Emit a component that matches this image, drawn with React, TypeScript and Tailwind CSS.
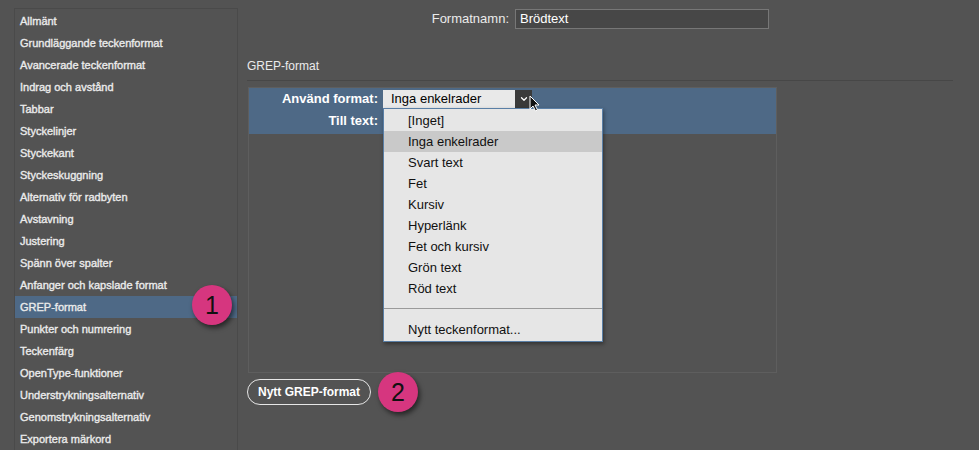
import { ChevronDown } from "lucide-react";

const sections = [
  "Allmänt",
  "Grundläggande teckenformat",
  "Avancerade teckenformat",
  "Indrag och avstånd",
  "Tabbar",
  "Styckelinjer",
  "Styckekant",
  "Styckeskuggning",
  "Alternativ för radbyten",
  "Avstavning",
  "Justering",
  "Spänn över spalter",
  "Anfanger och kapslade format",
  "GREP-format",
  "Punkter och numrering",
  "Teckenfärg",
  "OpenType-funktioner",
  "Understrykningsalternativ",
  "Genomstrykningsalternativ",
  "Exportera märkord",
];

const formats = [
  "[Inget]",
  "Inga enkelrader",
  "Svart text",
  "Fet",
  "Kursiv",
  "Hyperlänk",
  "Fet och kursiv",
  "Grön text",
  "Röd text",
];

function Badge({ n, className }: { n: number; className: string }) {
  return (
    <div
      className={`absolute flex h-10 w-10 items-center justify-center rounded-full bg-[#d6367f] text-[25px] leading-none text-[#111] shadow-[2px_3px_5px_rgba(0,0,0,0.55)] ${className}`}
    >
      {n}
    </div>
  );
}

export default function App() {
  return (
    <div className="relative flex h-[450px] w-[979px] overflow-hidden bg-[#535353] font-['Liberation_Sans',Arial,sans-serif] text-[11px] text-[#ebebeb]">
      {/* section list */}
      <aside className="ml-[14px] mt-[8px] w-[224px] shrink-0 border-l border-t border-r border-[#4a4a4a] pt-px">
        <ul>
          {sections.map((s) => (
            <li
              key={s}
              className={`flex h-[22px] items-center pl-[5px] [-webkit-text-stroke:0.35px_#ebebeb] ${
                s === "GREP-format" ? "bg-[#4e6986]" : ""
              }`}
            >
              {s}
            </li>
          ))}
        </ul>
      </aside>

      {/* main panel */}
      <main className="flex flex-1 flex-col pl-[9px] pr-[26px]">
        <div className="mt-[9px] flex h-5 items-center">
          <span className="ml-[177px] w-[91px] pr-[6px] text-right text-[13px]">Formatnamn:</span>
          <div className="flex h-5 w-[254px] items-center border border-[#777] bg-[#474747] px-[4px] text-[13px] text-white">
            Brödtext
          </div>
        </div>

        <div className="mt-[31px] text-[12px] leading-none">GREP-format</div>
        <div className="mt-[8px] h-px bg-[#474747]" />

        <div className="relative ml-px mt-[6px] h-[286px] w-[529px] border border-[#5e5e5e]">
          <div className="flex h-[46px] flex-col bg-[#4e6986] pt-px">
            <div className="flex h-[20px] items-center">
              <span className="w-[134px] pr-[5px] text-right text-[13px] font-bold text-white">Använd format:</span>
              <div className="flex h-[18px] w-[149px] items-stretch">
                <div className="flex flex-1 items-center bg-[#e9e9e9] px-[8px] text-[13px] text-black">
                  Inga enkelrader
                </div>
                <div className="flex w-[17px] items-center justify-center bg-[#3a3a3a]">
                  <ChevronDown size={10} strokeWidth={3} className="text-white" />
                </div>
              </div>
            </div>
            <div className="flex h-[24px] items-center">
              <span className="w-[134px] pr-[5px] text-right text-[13px] font-bold text-white">Till text:</span>
            </div>
          </div>

          {/* open dropdown menu */}
          <div className="absolute left-[134px] top-[20px] z-10 w-[220px] border border-[#5a7fa6] bg-[#e6e6e6] py-px text-[13px] text-[#111] shadow-[1px_2px_4px_rgba(0,0,0,0.4)]">
            {formats.map((f) => (
              <div
                key={f}
                className={`flex h-[21px] items-center pl-[24px] ${
                  f === "Inga enkelrader" ? "bg-[#c9c9c9]" : ""
                }`}
              >
                {f}
              </div>
            ))}
            <div className="mb-[10px] mt-[9px] h-px bg-[#9a9a9a]" />
            <div className="flex h-[21px] items-center pl-[24px]">Nytt teckenformat...</div>
          </div>

          {/* mouse pointer */}
          <svg
            className="absolute left-[280px] top-[7px] z-20"
            width="11"
            height="17"
            viewBox="0 0 11 17"
          >
            <path d="M1 1 L1 14 L4 11 L6.5 16 L8.5 15 L6 10 L10 10 Z" fill="#111" stroke="#fff" strokeWidth="1" />
          </svg>
        </div>

        <div className="mt-[6px]">
          <button className="h-[26px] rounded-full border border-[#e6e6e6] px-[10px] text-[12px] font-bold text-white">
            Nytt GREP-format
          </button>
        </div>
      </main>

      <Badge n={1} className="left-[192px] top-[285px]" />
      <Badge n={2} className="left-[378px] top-[372px]" />
      <Badge n={3} className="left-[553px] top-[123px]" />
    </div>
  );
}
